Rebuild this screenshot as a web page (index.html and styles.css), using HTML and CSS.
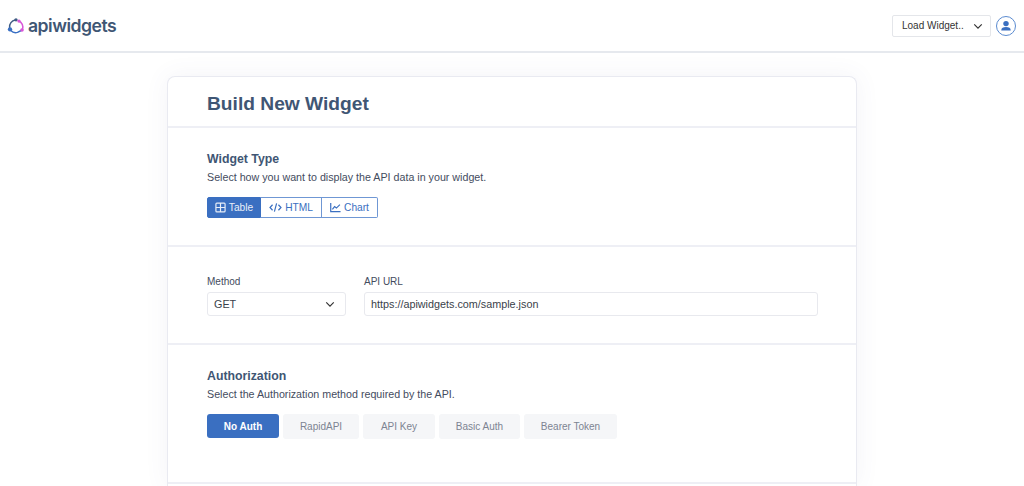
FILE: index.html
```html
<!doctype html>
<html lang="en">
	<head>
		<meta charset="utf-8">
		<meta name="viewport" content="width=device-width, initial-scale=1">
		<title>Build New Widget</title>
		<link rel="stylesheet" href="styles.css">
	</head>
	<body>
		<header class="topbar">
			<a class="brand" href="#">
				<svg class="brandIcon" width="18" height="18" viewBox="0 0 24 24" fill="none" stroke-width="2" stroke-linecap="round">
					<path d="M3.5 14 A9 9 0 0 1 11 4" stroke="#3f5c84"/>
					<path d="M15 5 A9 9 0 0 1 20.5 17" stroke="#d957d8"/>
					<path d="M5 18 A9 9 0 0 0 14 20.5 L19 18" stroke="#3a70c4"/>
					<circle cx="12" cy="3.8" r="2.2" fill="#3f5c84" stroke="none"/>
					<circle cx="16" cy="5.4" r="2.2" fill="#d957d8" stroke="none"/>
					<circle cx="20" cy="17.4" r="2.4" fill="#d957d8" stroke="none"/>
					<circle cx="4" cy="16.4" r="2.9" fill="#3a70c4" stroke="none"/>
				</svg>
				<span class="brandName">apiwidgets</span>
			</a>
			<div class="topActions">
				<button class="loadBtn" type="button">
					Load Widget..
					<svg width="10" height="10" viewBox="0 0 12 12" fill="none" stroke="#333" stroke-width="1.4"><path d="M1.5 4 L6 8.5 L10.5 4"/></svg>
				</button>
				<span class="avatar">
					<svg width="20" height="20" viewBox="0 0 20 20" fill="#3a6fc1">
						<circle cx="10" cy="6.6" r="3.9"/>
						<path d="M3.2 16.4 C3.2 12.6 6 11.4 10 11.4 C14 11.4 16.8 12.6 16.8 16.4 Z"/>
					</svg>
				</span>
			</div>
		</header>

		<main class="card">
			<div class="cardHead">
				<h1>Build New Widget</h1>
			</div>

			<section class="block typeBlock">
				<h2>Widget Type</h2>
				<p>Select how you want to display the API data in your widget.</p>
				<div class="btnGroup">
					<button class="groupBtn active" type="button">
						<svg width="11" height="11" viewBox="0 0 12 12" fill="none" stroke="currentColor" stroke-width="1.3"><rect x="1" y="1.2" width="10" height="9.6" rx="1"/><path d="M6 1.2 V10.8 M1 6 H11"/></svg>
						Table
					</button>
					<button class="groupBtn" type="button">
						<svg width="13" height="11" viewBox="0 0 14 12" fill="none" stroke="currentColor" stroke-width="1.3"><path d="M3.8 3 L1 6 L3.8 9 M10.2 3 L13 6 L10.2 9 M8.2 1.5 L5.8 10.5"/></svg>
						HTML
					</button>
					<button class="groupBtn" type="button">
						<svg width="11" height="11" viewBox="0 0 12 12" fill="none" stroke="currentColor" stroke-width="1.3"><path d="M.8 1 V10.6 H11.5 M2.6 8 L5 5 L7 6.6 L10.8 2.8"/></svg>
						Chart
					</button>
				</div>
			</section>

			<section class="block urlBlock">
				<div class="field methodField">
					<label for="method">Method</label>
					<div class="selectBox" id="method">
						GET
						<svg width="10" height="10" viewBox="0 0 12 12" fill="none" stroke="#333" stroke-width="1.4"><path d="M1.5 4 L6 8.5 L10.5 4"/></svg>
					</div>
				</div>
				<div class="field urlField">
					<label for="apiUrl">API URL</label>
					<input type="text" id="apiUrl" value="https://apiwidgets.com/sample.json">
				</div>
			</section>

			<section class="block authBlock">
				<h2>Authorization</h2>
				<p>Select the Authorization method required by the API.</p>
				<div class="authTabs">
					<button class="authTab active" type="button">No Auth</button>
					<button class="authTab" type="button">RapidAPI</button>
					<button class="authTab" type="button">API Key</button>
					<button class="authTab" type="button">Basic Auth</button>
					<button class="authTab" type="button">Bearer Token</button>
				</div>
			</section>
		</main>
	</body>
</html>
```

FILE: styles.css
```css
html, body {
	height: 100%;
	overflow: hidden;
}

body {
	margin: 0;
	background: #fff;
	font-family: "Liberation Sans", Arial, sans-serif;
	color: #3d4657;
}

button {
	font-family: inherit;
	cursor: pointer;
}

.topbar {
	display: flex;
	justify-content: space-between;
	align-items: center;
	box-sizing: border-box;
	height: 53px;
	padding: 0 8px 0 7px;
	background: #fff;
	border-bottom: 2px solid #e6e9ee;
}

.brand {
	display: flex;
	align-items: center;
	gap: 3px;
	text-decoration: none;
}

.brandName {
	font-family: Inter, sans-serif;
	font-size: 17.6px;
	font-weight: 600;
	letter-spacing: -.5px;
	color: #3f5674;
}

.topActions {
	display: flex;
	align-items: center;
	gap: 5px;
}

.loadBtn {
	display: flex;
	align-items: center;
	gap: 9px;
	box-sizing: border-box;
	width: 99px;
	height: 22px;
	padding: 0 0 0 9px;
	background: #fff;
	border: 1px solid #e4e6ea;
	border-radius: 2px;
	font-size: 10px;
	color: #333;
	white-space: nowrap;
}

.avatar {
	display: flex;
	align-items: center;
	justify-content: center;
	box-sizing: border-box;
	width: 20px;
	height: 20px;
	border: 1.3px solid #5b8bd0;
	border-radius: 50%;
	overflow: hidden;
}

.avatar svg {
	width: 14px;
	height: 14px;
}

/* runs off the bottom of the window, so no bottom border or radius */
.card {
	box-sizing: border-box;
	width: 690px;
	height: 410px;
	margin: 23px 0 0 167px;
	background: #fff;
	border: 1px solid #e9eaf1;
	border-bottom: 0;
	border-radius: 8px 8px 0 0;
	box-shadow: 0 0 24px rgba(90, 90, 140, .07);
}

.cardHead {
	height: 49px;
	padding-left: 39px;
	border-bottom: 2px solid #eeeff5;
}

h1 {
	margin: 0;
	padding-top: 15px;
	font-size: 19.2px;
	line-height: 24px;
	font-weight: 700;
	color: #3f5674;
}

.block {
	box-sizing: border-box;
	padding-left: 39px;
	border-bottom: 2px solid #eeeff5;
}

h2 {
	margin: 0;
	font-size: 12.3px;
	line-height: 16px;
	font-weight: 700;
	color: #3f5674;
}

.block p {
	margin: 3px 0 0;
	font-size: 10.7px;
	line-height: 14px;
	color: #444c5e;
}

.typeBlock {
	height: 119px;
	padding-top: 23px;
}

.btnGroup {
	display: flex;
	width: max-content;
	margin-top: 13px;
}

.groupBtn {
	display: flex;
	align-items: center;
	justify-content: center;
	gap: 3px;
	box-sizing: border-box;
	height: 21px;
	padding: 0;
	background: #fff;
	border: 1px solid #6f97d4;
	border-left-width: 0;
	font-size: 10.2px;
	color: #3a6fc1;
}

.groupBtn:nth-child(1) { width: 54px; }
.groupBtn:nth-child(2) { width: 61px; }
.groupBtn:nth-child(3) { width: 56px; }

.groupBtn:first-child {
	border-left-width: 1px;
	border-radius: 2px 0 0 2px;
}

.groupBtn:last-child {
	border-radius: 0 2px 2px 0;
}

.groupBtn.active {
	background: #3a6fc1;
	border-color: #3a6fc1;
	color: #e8eef8;
}

.urlBlock {
	display: flex;
	gap: 18px;
	height: 98px;
	padding-top: 28px;
}

.field label {
	display: block;
	margin-bottom: 4px;
	font-size: 10px;
	line-height: 13px;
	color: #444c5e;
}

.selectBox, .field input {
	box-sizing: border-box;
	height: 24px;
	background: #fff;
	border: 1px solid #e8e9ee;
	border-radius: 3px;
	font-family: inherit;
	font-size: 10.8px;
	color: #3a3f4a;
}

.selectBox {
	display: flex;
	justify-content: space-between;
	align-items: center;
	width: 139px;
	padding: 0 10px 0 6px;
}

.field input {
	display: block;
	width: 454px;
	padding: 0 6px;
}

.authBlock {
	height: 139px;
	padding-top: 23px;
}

.authTabs {
	display: flex;
	gap: 4px;
	margin-top: 13px;
}

.authTab {
	height: 25px;
	padding: 0;
	background: #f5f6f8;
	border: 0;
	border-radius: 3px;
	font-size: 10px;
	color: #7d8492;
}

.authTab:nth-child(1) { width: 72px; height: 24px; }
.authTab:nth-child(2) { width: 76px; }
.authTab:nth-child(3) { width: 72px; }
.authTab:nth-child(4) { width: 81px; }
.authTab:nth-child(5) { width: 93px; }

.authTab.active {
	background: #3a6fc1;
	font-weight: 700;
	color: #fff;
}
```
